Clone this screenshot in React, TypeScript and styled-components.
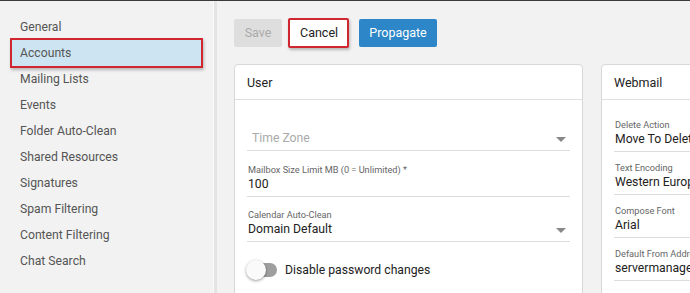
import React from 'react';
import styled, { createGlobalStyle } from 'styled-components';

const GlobalStyle = createGlobalStyle`
  html, body {
    margin: 0;
    padding: 0;
    background: #f2f2f2;
    font-family: Roboto, 'Liberation Sans', Arial, sans-serif;
    overflow: hidden;
  }
`;

const Page = styled.div`
  display: flex;
  width: 690px;
  height: 293px;
  background: #f2f2f2;
  border-top: 1px solid #3a3a3a;
  box-sizing: border-box;
  overflow: hidden;
`;

const Sidebar = styled.nav`
  flex: 0 0 213px;
  display: flex;
  flex-direction: column;
  padding-top: 13px;
  border-right: 1px solid #fafafa;
  box-shadow: 3px 0 0 #e4e4e4;
`;

const NavItem = styled.div<{ active?: boolean }>`
  display: flex;
  align-items: center;
  box-sizing: border-box;
  margin: ${p => (p.active ? '-2px 10px' : '0')};
  padding-left: ${p => (p.active ? '8px' : '20px')};
  font-size: 12.2px;
  color: #555;
  background: ${p => (p.active ? '#cde5f2' : 'transparent')};
  border: ${p => (p.active ? '2px solid #cf2630' : 'none')};
  height: ${p => (p.active ? '30px' : '26px')};
  box-shadow: ${p => (p.active ? '1px 2px 3px rgba(0,0,0,0.25)' : 'none')};
`;

const Main = styled.main`
  flex: 1;
  padding: 17px 0 0 20px;
  display: flex;
  flex-direction: column;
  gap: 17px;
  min-width: 0;
`;

const Toolbar = styled.div`
  display: flex;
  align-items: center;
  gap: 6px;
  height: 29px;
`;

const Button = styled.button<{ variant: 'disabled' | 'plain' | 'primary' }>`
  font-family: inherit;
  font-size: 12.5px;
  border-radius: 2px;
  padding: 0 10px;
  margin-left: ${p => (p.variant === 'primary' ? '4px' : '0')};
  cursor: pointer;
  border: ${p => (p.variant === 'plain' ? '2px solid #cf2630' : 'none')};
  background: ${p =>
    p.variant === 'primary' ? '#2c86c8' : p.variant === 'plain' ? '#ffffff' : '#dedede'};
  color: ${p => (p.variant === 'primary' ? '#fff' : p.variant === 'plain' ? '#222' : '#aaa')};
  box-shadow: ${p => (p.variant === 'plain' ? '1px 2px 3px rgba(0,0,0,0.25)' : 'none')};
  height: ${p => (p.variant === 'plain' ? '30px' : '28px')};
  width: ${p => (p.variant === 'plain' ? '61px' : p.variant === 'primary' ? '78px' : '48px')};
`;

const Cards = styled.div`
  display: flex;
  gap: 18px;
  align-items: flex-start;
`;

const Card = styled.section<{ width: number }>`
  flex: 0 0 ${p => p.width}px;
  background: #fff;
  border: 1px solid #d8d8d8;
  border-radius: 4px;
  height: 260px;
  box-sizing: border-box;
`;

const CardHeader = styled.div`
  height: 34px;
  display: flex;
  align-items: center;
  padding-left: 12px;
  font-size: 12.5px;
  color: #222;
  border-bottom: 1px solid #e0e0e0;
`;

const CardBody = styled.div<{ top: number }>`
  padding: ${p => p.top}px 12px 0 12px;
  display: flex;
  flex-direction: column;
`;

const Field = styled.div<{ gap: number }>`
  position: relative;
  display: flex;
  flex-direction: column;
  border-bottom: 1px solid #dcdcdc;
  padding-bottom: 3px;
  margin-bottom: ${p => p.gap}px;
`;

const Label = styled.div`
  font-size: 9.2px;
  color: #666;
  line-height: 12px;
  padding-left: 1px;
`;

const Value = styled.div<{ muted?: boolean }>`
  font-size: 12.2px;
  line-height: 17px;
  color: ${p => (p.muted ? '#aaa' : '#222')};
  padding-left: ${p => (p.muted ? '5px' : '1px')};
  white-space: nowrap;
  overflow: hidden;
`;

const Caret = styled.span`
  position: absolute;
  right: 4px;
  bottom: 8px;
  width: 0;
  height: 0;
  border-left: 5px solid transparent;
  border-right: 5px solid transparent;
  border-top: 5px solid #888;
`;

const ToggleRow = styled.label`
  display: flex;
  align-items: center;
  gap: 8px;
  font-size: 12.2px;
  color: #222;
  margin-top: 9px;
`;

const Track = styled.span`
  position: relative;
  width: 28px;
  height: 14px;
  margin-left: 2px;
  border-radius: 7px;
  background: #9e9e9e;
`;

const Knob = styled.span`
  position: absolute;
  left: -3px;
  top: -3px;
  width: 20px;
  height: 20px;
  border-radius: 50%;
  background: #fafafa;
  box-shadow: 0 1px 3px rgba(0, 0, 0, 0.4);
`;

const navItems = [
  'General',
  'Accounts',
  'Mailing Lists',
  'Events',
  'Folder Auto-Clean',
  'Shared Resources',
  'Signatures',
  'Spam Filtering',
  'Content Filtering',
  'Chat Search',
];

const webmailFields = [
  { label: 'Delete Action', value: 'Move To Deleted Items' },
  { label: 'Text Encoding', value: 'Western European (ISO)' },
  { label: 'Compose Font', value: 'Arial' },
  { label: 'Default From Address', value: 'servermanager@example.com' },
];

const App: React.FC = () => {
  return (
    <>
      <GlobalStyle />
      <Page>
        <Sidebar>
          {navItems.map(item => (
            <NavItem key={item} active={item === 'Accounts'}>
              {item}
            </NavItem>
          ))}
        </Sidebar>
        <Main>
          <Toolbar>
            <Button variant="disabled">Save</Button>
            <Button variant="plain">Cancel</Button>
            <Button variant="primary">Propagate</Button>
          </Toolbar>
          <Cards>
            <Card width={349}>
              <CardHeader>User</CardHeader>
              <CardBody top={30}>
                <Field gap={13}>
                  <Value muted>Time Zone</Value>
                  <Caret />
                </Field>
                <Field gap={12}>
                  <Label>Mailbox Size Limit MB (0 = Unlimited) *</Label>
                  <Value>100</Value>
                </Field>
                <Field gap={12}>
                  <Label>Calendar Auto-Clean</Label>
                  <Value>Domain Default</Value>
                  <Caret />
                </Field>
                <ToggleRow>
                  <Track>
                    <Knob />
                  </Track>
                  Disable password changes
                </ToggleRow>
              </CardBody>
            </Card>
            <Card width={200}>
              <CardHeader>Webmail</CardHeader>
              <CardBody top={19}>
                {webmailFields.map(f => (
                  <Field key={f.label} gap={10}>
                    <Label>{f.label}</Label>
                    <Value>{f.value}</Value>
                  </Field>
                ))}
              </CardBody>
            </Card>
          </Cards>
        </Main>
      </Page>
    </>
  );
};

export default App;
